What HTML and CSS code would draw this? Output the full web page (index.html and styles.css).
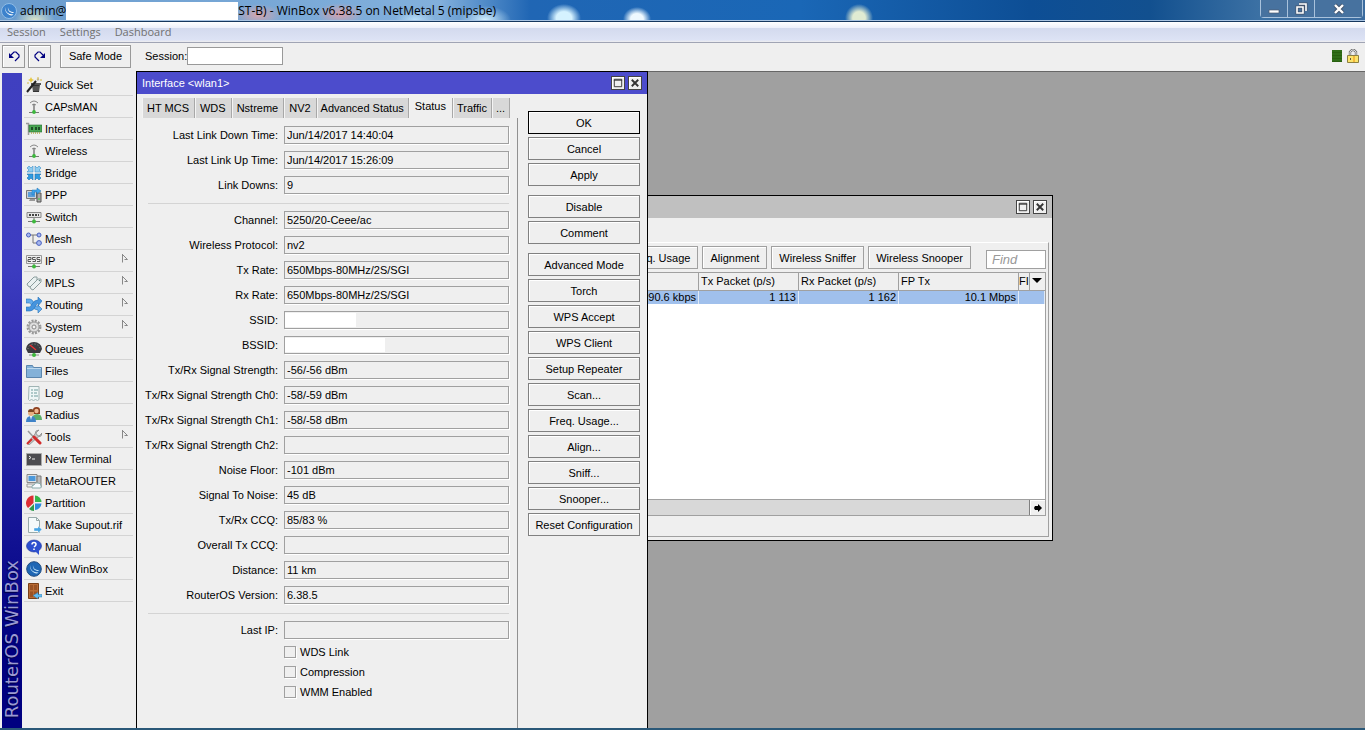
FILE: index.html
```html
<!DOCTYPE html>
<html lang="en">
<head>
  <meta charset="UTF-8">
  <meta name="viewport" content="width=device-width, initial-scale=1.0">
  <title>WinBox v6.38.5</title>
  <link rel="stylesheet" href="styles.css">
</head>
<body>
  <!-- Title bar -->
  <header class="titlebar">
    <svg class="app-icon" viewBox="0 0 16 16"><circle cx="8" cy="8" r="7.500" fill="#3c82cc" stroke="#8fbce6"/><path d="M4 3.500c0 5 3 8 8.500 8L11 12.500C6 12 3.500 8 4 3.500zM7 4c0 3 2 5 6 5l-1 1C8 9.500 6.500 7 7 4z" fill="#fff"/></svg>
    <span>admin@</span>
    <span class="blank"></span>
    <span>ST-B) - WinBox v6.38.5 on NetMetal 5 (mipsbe)</span>
    <div class="win-controls">
      <button aria-label="Minimize"><svg viewBox="0 0 14 14"><path d="M2 8h10v3H2z" fill="#fff" stroke="#4a5a70" stroke-width=".7"/></svg></button>
      <button aria-label="Restore"><svg viewBox="0 0 14 14"><path d="M5 2h7v7M3 5h6v6H3z" fill="none" stroke="#44546c" stroke-width="3"/><path d="M5 2h7v7M3 5h6v6H3z" fill="none" stroke="#fff" stroke-width="1.600"/></svg></button>
      <button class="close" aria-label="Close"><svg viewBox="0 0 14 14"><path d="M3 3l8 8M11 3l-8 8" stroke="#44546c" stroke-width="4"/><path d="M3 3l8 8M11 3l-8 8" stroke="#fff" stroke-width="2.400"/></svg></button>
    </div>
  </header>

  <nav class="menubar">
    <a href="#">Session</a>
    <a href="#">Settings</a>
    <a href="#">Dashboard</a>
  </nav>

  <div class="toolbar">
    <button class="tool" aria-label="Undo"><svg viewBox="0 0 14 14"><path d="M2 4v5h5z" fill="#000080"/><path d="M4 6l3-3h2l3 3v2l-4 4" fill="none" stroke="#000080" stroke-width="1.200"/></svg></button>
    <button class="tool" aria-label="Redo"><svg viewBox="0 0 14 14"><path d="M12 4v5H7z" fill="#000080"/><path d="M10 6L7 3H5L2 6v2l4 4" fill="none" stroke="#000080" stroke-width="1.200"/></svg></button>
    <button class="safe">Safe Mode</button>
    <label for="session">Session:</label>
    <input type="text" id="session">
    <span class="load"></span>
    <svg class="lock" viewBox="0 0 12 14"><path d="M3 7V3l2-2h2l2 2v4" fill="none" stroke="#777" stroke-width="2.400"/><path d="M3 7V3l2-2h2l2 2v4" fill="none" stroke="#ddd"/><path d="M.5 6.500h11v7H.5z" fill="#fbe46c" stroke="#8c8040"/><path d="M6 7h2v6H6z" fill="#f6b93c"/><path d="M3 9h1v2H3z" fill="#654"/></svg>
  </div>

  <div class="workspace">
    <div class="brand"><span>RouterOS WinBox</span></div>

    <nav class="sidebar">
      <a href="#"><svg viewBox="0 0 16 16"><path d="M6 7h8l-1 8H7z" fill="#333"/><path d="M5 6h10v2H5z" fill="#555"/><path d="M8 9v5M10 9v5M12 9v5" stroke="#777"/><path d="M1 15l9-11" stroke="#222" stroke-width="2"/><path d="M11 3l2-1" stroke="#bbb" stroke-width="2"/><path d="M5 0l1 2 2 1-2 1-1 2-1-2-2-1 2-1z" fill="#e8c840"/><path d="M12 0v3M14 3h2M1 6h2" stroke="#d8b840"/></svg>Quick Set</a>
      <a href="#"><svg viewBox="0 0 16 16"><path d="M4 4q4-4 8 0M6 6q2-2 4 0" fill="none" stroke="#888"/><path d="M8 5v8" stroke="#777" stroke-width="1.400"/><path d="M3 13.500h10" stroke="#777"/><circle cx="8" cy="13" r="1.900" fill="#3cb83c"/></svg>CAPsMAN</a>
      <a href="#"><svg viewBox="0 0 16 16"><path d="M0 2.500h2.500V14" fill="none" stroke="#999" stroke-width="1.500"/><path d="M3 4h13v7H3z" fill="#4aa653" stroke="#267032" stroke-width=".6"/><path d="M5 6h2v3H5zM9 6h2v3H9zM12 6h2v3h-2z" fill="#1f4f28"/><path d="M5 12h9" stroke="#b0a850" stroke-dasharray="1 1" stroke-width="1.500"/></svg>Interfaces</a>
      <a href="#"><svg viewBox="0 0 16 16"><path d="M4 4q4-4 8 0M6 6q2-2 4 0" fill="none" stroke="#888"/><path d="M8 5v8" stroke="#777" stroke-width="1.400"/><path d="M3 13.500h10" stroke="#777"/><circle cx="8" cy="13" r="1.900" fill="#3cb83c"/></svg>Wireless</a>
      <a href="#"><svg viewBox="0 0 16 16"><g fill="#8fcdf0" stroke="#3d8fca" stroke-width=".6"><path d="M1 3l2-2 2 2 2-2v6H1l2-2z"/><path d="M15 3l-2-2-2 2-2-2v6h6l-2-2z"/></g><g fill="#2f9be0" stroke="#1c70b0" stroke-width=".6"><path d="M1 13l2 2 2-2 2 2V9H1l2 2z"/><path d="M15 13l-2 2-2-2-2 2V9h6l-2 2z"/></g></svg>Bridge</a>
      <a href="#"><svg viewBox="0 0 16 16"><path d="M.5 3.500h10v8H.5z" fill="#ccd2d8" stroke="#777"/><path d="M2 5h7v5H2z" fill="#5c9ed8"/><path d="M3 14h6v-2H4z" fill="#999"/><path d="M11 6h4v9h-4z" fill="#aaa" stroke="#555"/><path d="M12 12h2" stroke="#3c3"/><path d="M6 8V3h5V1l4 3-4 3V5H8v3z" fill="#41a6ee" stroke="#1b70b5" stroke-width=".5"/></svg>PPP</a>
      <a href="#"><svg viewBox="0 0 16 16"><path d="M1 3.500h14v5H1z" fill="#e4e4e4" stroke="#888"/><path d="M3 6h10" stroke="#444" stroke-width="2" stroke-dasharray="2 1"/><path d="M8 9v4M2 12.500h12" stroke="#777"/><circle cx="8" cy="12.500" r="2" fill="#3cb83c"/></svg>Switch</a>
      <a href="#"><svg viewBox="0 0 16 16"><path d="M4 4h8M7 4v8h5" fill="none" stroke="#777"/><g fill="#a8b8f0" stroke="#4860c0"><circle cx="2.500" cy="4" r="2"/><circle cx="13" cy="4" r="2"/><circle cx="13" cy="12" r="2.400"/></g></svg>Mesh</a>
      <a href="#"><svg viewBox="0 0 16 16"><path d="M.5 2.500h15v8H.5z" fill="#eee" stroke="#999"/><path d="M2 4.500h3v2H2v2h3M9.500 4.500h-3v2h3v2h-3M14 4.500h-3v2h3v2h-3" fill="none" stroke="#555"/><path d="M8 11v3M2 13.500h12" stroke="#777"/><circle cx="8" cy="13.500" r="2" fill="#3cb83c"/></svg>IP<svg class="more" viewBox="0 0 7 10"><path d="M1.500 0v8.500M1.500.5l5 5h-3" fill="none" stroke="#888"/></svg></a>
      <a href="#"><svg viewBox="0 0 16 16"><g fill="#e9f0f0" stroke="#8a9c9c"><path d="M1 9l7-7h3v3l-7 7-2-1z"/><path d="M4 12l8-8h3v3l-8 8-2-1z"/></g><circle cx="13.500" cy="5.500" r=".8" fill="#688"/></svg>MPLS<svg class="more" viewBox="0 0 7 10"><path d="M1.500 0v8.500M1.500.5l5 5h-3" fill="none" stroke="#888"/></svg></a>
      <a href="#"><svg viewBox="0 0 16 16"><path d="M0 2h4q2 0 4 4t4 4V8l4 4-4 4v-3q-4 0-6-4T3 6H0z" fill="#63acec" stroke="#2672ba" stroke-width=".6"/><path d="M0 14h4q3 0 5-4t3-4v3l4-5-4-4v3q-4 0-6 4t-3 3H0z" fill="#4594de" stroke="#2672ba" stroke-width=".6"/></svg>Routing<svg class="more" viewBox="0 0 7 10"><path d="M1.500 0v8.500M1.500.5l5 5h-3" fill="none" stroke="#888"/></svg></a>
      <a href="#"><svg viewBox="0 0 16 16"><circle cx="8" cy="8" r="6.200" fill="none" stroke="#999" stroke-width="2.500" stroke-dasharray="2 1.250"/><circle cx="8" cy="8" r="5" fill="#ddd" stroke="#999"/><circle cx="8" cy="8" r="2" fill="#f4f4f4" stroke="#888"/></svg>System<svg class="more" viewBox="0 0 7 10"><path d="M1.500 0v8.500M1.500.5l5 5h-3" fill="none" stroke="#888"/></svg></a>
      <a href="#"><svg viewBox="0 0 16 16"><path d="M0 8a8 7 0 0 1 16 0l-2 4H2z" fill="#3b3b40"/><path d="M2 8a6 5 0 0 1 12 0" fill="none" stroke="#999" stroke-dasharray="1 2"/><path d="M4 4l6 5" stroke="#e33" stroke-width="1.300"/><path d="M8 12v2M3 14h10" stroke="#888"/><circle cx="8" cy="14" r="2" fill="#3cb83c"/></svg>Queues</a>
      <a href="#"><svg viewBox="0 0 16 16"><path d="M.5 2.500h6l1 2h8v10H.5z" fill="#83b1d8" stroke="#5b86ad"/><path d="M1 5.500h14" stroke="#bcd8ee"/></svg>Files</a>
      <a href="#"><svg viewBox="0 0 16 16"><path d="M3 1.500h10v13l-1.500 1-2-1-2 1-2-1-2 1-1-1z" fill="#eef6f6" stroke="#a0b4b4"/><path d="M5 5h2M8 5h4M5 8h2M8 8h3M5 11h2M8 11h4" stroke="#6f9c9c"/></svg>Log</a>
      <a href="#"><svg viewBox="0 0 16 16"><path d="M7 7V3q0-3 3.500-3T14 3v4z" fill="#8c3d1c"/><circle cx="10.500" cy="4" r="2.200" fill="#f0b890"/><path d="M6 13q0-6 5-6t5 6z" fill="#5cae68"/><circle cx="5" cy="6" r="3" fill="#e8b080"/><path d="M2 5q0-3 3-3t3 3z" fill="#7c4420"/><path d="M0 15q0-6 5-6t5 6z" fill="#3f82c8"/><path d="M4 9h2l-1 4z" fill="#fff"/></svg>Radius</a>
      <a href="#"><svg viewBox="0 0 16 16"><path d="M2 2l11 12" stroke="#999" stroke-width="1.500"/><path d="M13 1l-3 3 1 2 2 1 3-3q0 4-4 4l-9 8-2-2 8-9q0-4 4-4z" fill="#c4c4c4" stroke="#777" stroke-width=".6"/><path d="M8 8l6 6" stroke="#d22c2c" stroke-width="3" stroke-linecap="round"/><path d="M1 15l5-5" stroke="#d22c2c" stroke-width="2"/></svg>Tools<svg class="more" viewBox="0 0 7 10"><path d="M1.500 0v8.500M1.500.5l5 5h-3" fill="none" stroke="#888"/></svg></a>
      <a href="#"><svg viewBox="0 0 16 16"><path d="M.5 2.500h15v12H.5z" fill="#4c4c50" stroke="#aaa"/><path d="M3 5l2 1.500L3 8M6 8h3" fill="none" stroke="#eee"/></svg>New Terminal</a>
      <a href="#"><svg viewBox="0 0 16 16"><path d="M1 1.500h10v8H1z" fill="#dfe4ea" stroke="#888"/><path d="M2.500 3h7v5h-7z" fill="#4b98da"/><path d="M11 3h4v11h-4z" fill="#bbb" stroke="#777"/><path d="M1 11h8v3H1z" fill="#eee" stroke="#999"/><path d="M6 15q-1-3 2-3 1-3 4-2 3 0 3 3 1 2-1 2z" fill="#f7fbff" stroke="#8aa"/></svg>MetaROUTER</a>
      <a href="#"><svg viewBox="0 0 16 16"><path d="M7.500 8V0.500A7.500 7.500 0 0 0 2 13z" fill="#dd2e34"/><path d="M9 7V.5A7 7 0 0 1 15.500 7z" fill="#36b64a"/><path d="M9 8.500h6.500A7 7 0 0 1 9 15z" fill="#2d8cdd"/><path d="M8 9l-5 5q2 2 5 2z" fill="#2b9b48"/></svg>Partition</a>
      <a href="#"><svg viewBox="0 0 16 16"><path d="M2.500.5h8l3 3v12h-11z" fill="#f4fafa" stroke="#98aaaa"/><path d="M10.500.5v3h3" fill="none" stroke="#98aaaa"/><path d="M8 11h4V9l4 3.500-4 3.500v-2H8z" fill="#45a5e4" stroke="#fff" stroke-width=".4"/></svg>Make Supout.rif</a>
      <a href="#"><svg viewBox="0 0 16 16"><ellipse cx="8" cy="7" rx="7.500" ry="6" fill="#2d50d0" stroke="#1a2f98" stroke-width=".6"/><path d="M9 12l4-1v5z" fill="#2d50d0"/><path d="M6 5.500q0-2 2-2t2 2q0 1-2 2.500M8 9.500v1.500" fill="none" stroke="#fff" stroke-width="1.500"/></svg>Manual</a>
      <a href="#"><svg viewBox="0 0 16 16"><circle cx="8" cy="8" r="7.300" fill="#1e66b4" stroke="#204c80"/><path d="M4 3.500c0 5 3 8 8.500 8L11 12.500C6 12 3.500 8 4 3.500zM7 4c0 3 2 5 6 5l-1 1C8 9.500 6.500 7 7 4z" fill="#c8e8fc"/></svg>New WinBox</a>
      <a href="#"><svg viewBox="0 0 16 16"><path d="M2.500.5h10v15h-10z" fill="#b86a34" stroke="#7a4018"/><path d="M4 2h3v5H4zM8 2h3v5H8zM4 8.500h3V14H4zM8 8.500h3V14H8z" fill="#9a5224"/><path d="M16 11.500h-4v-2L7 12.500l5 3.500v-2h4z" fill="#65bdf0" stroke="#2878b0" stroke-width=".5"/></svg>Exit</a>
    </nav>

    <main class="desktop">
      <!-- Wireless tables window -->
      <section class="window tables">
        <div class="window-title">
          <button class="ctl" aria-label="Maximize"><svg viewBox="0 0 13 13"><path d="M2.500 2.500h8v8h-8zM2 3.500h9" fill="none" stroke="#333"/></svg></button>
          <button class="ctl" aria-label="Close"><svg viewBox="0 0 13 13"><path d="M3 3l7 7M10 3l-7 7" stroke="#333" stroke-width="2"/></svg></button>
        </div>
        <div class="tables-body">
          <div class="table-tools">
            <button>Freq. Usage</button>
            <button>Alignment</button>
            <button>Wireless Sniffer</button>
            <button>Wireless Snooper</button>
            <input type="text" class="find" placeholder="Find" aria-label="Find">
          </div>
          <div class="grid">
            <table>
              <colgroup><col><col class="c-packet"><col class="c-packet"><col class="c-fp"><col class="c-cut"><col class="c-drop"></colgroup>
              <thead>
                <tr><th></th><th>Tx Packet (p/s)</th><th>Rx Packet (p/s)</th><th>FP Tx</th><th class="cut">FI</th><th class="drop"><svg viewBox="0 0 10 6"><path d="M0 0h10L5 5z"/></svg></th></tr>
              </thead>
              <tbody>
                <tr><td>90.6 kbps</td><td>1 113</td><td>1 162</td><td>10.1 Mbps</td><td colspan="2"></td></tr>
              </tbody>
            </table>
          </div>
          <div class="scroll"><button aria-label="Scroll right"><svg viewBox="0 0 8 8"><path d="M1 2h3V0l4 4-4 4V6H1L0 4z"/></svg></button></div>
        </div>
      </section>

      <!-- Interface window -->
      <section class="window interface">
        <div class="window-title">
          <span>Interface &lt;wlan1&gt;</span>
          <button class="ctl" aria-label="Maximize"><svg viewBox="0 0 13 13"><path d="M2.500 2.500h8v8h-8zM2 3.500h9" fill="none" stroke="#333"/></svg></button>
          <button class="ctl" aria-label="Close"><svg viewBox="0 0 13 13"><path d="M3 3l7 7M10 3l-7 7" stroke="#333" stroke-width="2"/></svg></button>
        </div>
        <div class="interface-body">
          <div class="left">
            <div class="tabs">
              <button>HT MCS</button>
              <button>WDS</button>
              <button>Nstreme</button>
              <button>NV2</button>
              <button>Advanced Status</button>
              <button class="active">Status</button>
              <button>Traffic</button>
              <button>...</button>
            </div>
            <form class="status">
              <div class="field"><label for="f1">Last Link Down Time:</label><input id="f1" value="Jun/14/2017 14:40:04" readonly></div>
              <div class="field"><label for="f2">Last Link Up Time:</label><input id="f2" value="Jun/14/2017 15:26:09" readonly></div>
              <div class="field"><label for="f3">Link Downs:</label><input id="f3" value="9" readonly></div>
              <hr>
              <div class="field"><label for="f4">Channel:</label><input id="f4" value="5250/20-Ceee/ac" readonly></div>
              <div class="field"><label for="f5">Wireless Protocol:</label><input id="f5" value="nv2" readonly></div>
              <div class="field"><label for="f6">Tx Rate:</label><input id="f6" value="650Mbps-80MHz/2S/SGI" readonly></div>
              <div class="field"><label for="f7">Rx Rate:</label><input id="f7" value="650Mbps-80MHz/2S/SGI" readonly></div>
              <div class="field"><label for="f8">SSID:</label><input id="f8" class="masked short" readonly></div>
              <div class="field"><label for="f9">BSSID:</label><input id="f9" class="masked" readonly></div>
              <div class="field"><label for="f10">Tx/Rx Signal Strength:</label><input id="f10" value="-56/-56 dBm" readonly></div>
              <div class="field"><label for="f11">Tx/Rx Signal Strength Ch0:</label><input id="f11" value="-58/-59 dBm" readonly></div>
              <div class="field"><label for="f12">Tx/Rx Signal Strength Ch1:</label><input id="f12" value="-58/-58 dBm" readonly></div>
              <div class="field"><label for="f13">Tx/Rx Signal Strength Ch2:</label><input id="f13" readonly></div>
              <div class="field"><label for="f14">Noise Floor:</label><input id="f14" value="-101 dBm" readonly></div>
              <div class="field"><label for="f15">Signal To Noise:</label><input id="f15" value="45 dB" readonly></div>
              <div class="field"><label for="f16">Tx/Rx CCQ:</label><input id="f16" value="85/83 %" readonly></div>
              <div class="field"><label for="f17">Overall Tx CCQ:</label><input id="f17" readonly></div>
              <div class="field"><label for="f18">Distance:</label><input id="f18" value="11 km" readonly></div>
              <div class="field"><label for="f19">RouterOS Version:</label><input id="f19" value="6.38.5" readonly></div>
              <hr>
              <div class="field"><label for="f20">Last IP:</label><input id="f20" readonly></div>
              <div class="checks">
                <label><input type="checkbox">WDS Link</label>
                <label><input type="checkbox">Compression</label>
                <label><input type="checkbox">WMM Enabled</label>
              </div>
            </form>
          </div>
          <div class="actions">
            <div class="group">
              <button class="default">OK</button>
              <button>Cancel</button>
              <button>Apply</button>
            </div>
            <div class="group">
              <button>Disable</button>
              <button>Comment</button>
            </div>
            <div class="group">
              <button>Advanced Mode</button>
              <button>Torch</button>
              <button>WPS Accept</button>
              <button>WPS Client</button>
              <button>Setup Repeater</button>
              <button>Scan...</button>
              <button>Freq. Usage...</button>
              <button>Align...</button>
              <button>Sniff...</button>
              <button>Snooper...</button>
              <button>Reset Configuration</button>
            </div>
          </div>
        </div>
      </section>
    </main>
  </div>
</body>
</html>
```
FILE: styles.css
```css
* {
  box-sizing: border-box;
}

body {
  margin: 0;
  height: 100vh;
  display: flex;
  flex-direction: column;
  overflow: hidden;
  background: #efefef;
  border-bottom: 2px solid #2a5878;
  color: #000;
  font-family: "Liberation Sans", Arial, sans-serif;
  font-size: 11px;
}

button, input {
  font: inherit;
  color: inherit;
  margin: 0;
}

button {
  display: flex;
  align-items: center;
  justify-content: center;
  padding: 0;
  background: #efefef;
  border: 1px solid #808080;
  box-shadow: inset 1px 1px #fff;
  white-space: nowrap;
}

a {
  color: inherit;
  text-decoration: none;
}

/* Title bar */
.titlebar {
  display: flex;
  align-items: center;
  flex: none;
  height: 22px;
  padding-left: 1px;
  border-bottom: 1px solid #16375e;
  box-shadow: inset 0 -1px #a9c4e2;
  font-family: "Open Sans", sans-serif;
  font-size: 12px;
  background:
    radial-gradient(ellipse 20px 12px at 35px 20px, #dce4c8, transparent),
    radial-gradient(ellipse 24px 11px at 258px 15px, #d4a5ae, transparent),
    radial-gradient(ellipse 24px 11px at 340px 14px, #d7a1ac, transparent),
    radial-gradient(ellipse 20px 10px at 415px 20px, #b9def7, transparent),
    radial-gradient(ellipse 26px 14px at 485px 20px, #d2f0ff, transparent),
    radial-gradient(ellipse 17px 14px at 564px 18px, #d5f2ff 45%, transparent),
    radial-gradient(ellipse 14px 12px at 637px 19px, #eef9ff 45%, transparent),
    radial-gradient(ellipse 14px 14px at 859px 18px, #e0ebd2 45%, transparent),
    linear-gradient(90deg, #6a9cce 0, #82b0dc 440px, #2066b4 530px, #1a67b6 800px, #0d4e95 1030px, #12508f 1150px, #3c71a4 1260px, #3c6c9f);
}

.app-icon {
  width: 16px;
  height: 16px;
  margin-right: 3px;
}

.blank {
  align-self: stretch;
  width: 172px;
  margin: 2px 0 1px;
  background: #fff;
}

.win-controls {
  display: flex;
  align-self: flex-start;
  margin: 0 2px 0 auto;
  border: 1px solid #a9c2dc;
  border-top: 0;
  border-radius: 0 0 4px 4px;
}

.win-controls button {
  width: 27px;
  height: 17px;
  background: #47729f;
  border: 0;
  border-right: 1px solid #a9c2dc;
  box-shadow: none;
}

.win-controls .close {
  width: 47px;
  border-right: 0;
}

.win-controls svg {
  width: 14px;
  height: 14px;
}

/* Menu and toolbar */
.menubar {
  display: flex;
  align-items: center;
  flex: none;
  gap: 14px;
  height: 21px;
  padding: 0 0 2px 7px;
  color: #707070;
  font-family: "Open Sans", sans-serif;
  background: linear-gradient(#fff, #eceffa 30%, #d3daee 31%, #dde3f5 90%, #eee);
  border-bottom: 1px solid #a0a4b4;
}

.toolbar {
  display: flex;
  align-items: center;
  flex: none;
  height: 28px;
  padding: 0 6px 2px 2px;
}

.toolbar button {
  height: 23px;
  border-color: #999;
}

.toolbar .tool {
  width: 23px;
  margin-right: 3px;
}

.tool svg {
  width: 14px;
  height: 14px;
}

.toolbar .safe {
  width: 71px;
  margin: 0 14px 0 6px;
}

.toolbar input {
  width: 96px;
  height: 18px;
  border: 1px solid #999;
}

.load {
  width: 10px;
  height: 12px;
  margin: 0 5px 0 auto;
  background: repeating-linear-gradient(#2f6d18 0 2px, #28600f 2px 3px);
}

.lock {
  width: 12px;
  height: 14px;
}

/* Workspace */
.workspace {
  display: flex;
  flex: 1;
  min-height: 0;
}

.brand {
  flex: none;
  width: 20px;
  margin: 2px 0 0 2px;
  display: flex;
  align-items: flex-end;
  justify-content: center;
  padding-bottom: 10px;
  background: linear-gradient(#4040c0, #3c3cc0 30%, #000080 88%);
  color: #9a9ad2;
  font-family: "DejaVu Sans", sans-serif;
  font-size: 18px;
  line-height: 20px;
}

.brand span {
  writing-mode: vertical-rl;
  transform: rotate(180deg);
  white-space: nowrap;
  text-shadow: -1px -1px 1px #000040;
}

.sidebar {
  flex: none;
  width: 114px;
  padding: 3px 3px 0 2px;
}

.sidebar a {
  display: flex;
  align-items: center;
  height: 22px;
  padding-left: 2px;
  border-bottom: 1px solid #d4d4d4;
}

.sidebar svg {
  width: 16px;
  height: 16px;
  margin-right: 3px;
}

.sidebar .more {
  width: 7px;
  height: 10px;
  margin: 0 5px 4px auto;
}

.desktop {
  position: relative;
  flex: 1;
  overflow: hidden;
  background: #a0a0a0;
  box-shadow: inset 0 1px #666;
}

/* Windows */
.window {
  position: absolute;
  display: flex;
  flex-direction: column;
  border: 1px solid #000;
  background: #efefef;
}

.window-title {
  display: flex;
  align-items: center;
  flex: none;
  gap: 3px;
  height: 22px;
  padding: 0 5px;
}

.window-title span {
  margin-right: auto;
}

.ctl {
  width: 14px;
  height: 14px;
  border-color: #444;
}

.ctl svg {
  width: 12px;
  height: 12px;
}

.interface {
  left: 0;
  top: 0;
  width: 512px;
  height: 100%;
  border-bottom: 0;
}

.interface .window-title {
  background: #4c4ccc;
  color: #fff;
}

.interface-body {
  display: flex;
  flex: 1;
  gap: 10px;
  padding: 4px 7px 0 5px;
}

.left {
  flex: 1;
  display: flex;
  flex-direction: column;
}

.tabs {
  display: flex;
  align-items: flex-end;
  flex: none;
  height: 20px;
}

.tabs button {
  height: 20px;
  padding: 0 4px;
  border: 0;
  border-right: 1px solid #a8a8a8;
  background: #d8d8d8;
  box-shadow: inset 1px 0 #f4f4f4;
}

.tabs button:nth-child(-n+4) {
  padding: 0 5px;
}

.tabs .active {
  padding: 0 6px 4px;
  background: #efefef;
}

.status {
  flex: 1;
  padding: 8px 8px 0 3px;
  border-right: 1px solid #909090;
}

.field {
  display: flex;
  align-items: center;
  gap: 6px;
  margin-bottom: 7px;
}

.field label {
  width: 133px;
  text-align: right;
  white-space: nowrap;
}

.field input {
  flex: 1;
  min-width: 0;
  height: 18px;
  padding: 0 2px;
  border: 1px solid #a0a0a0;
  box-shadow: 1px 1px #fff;
  background: #efefef;
}

.field .masked {
  background: linear-gradient(#fff, #fff) 0 1px / 100px 14px no-repeat #efefef;
}

.field .short {
  background-size: 71px 14px;
}

.status hr {
  height: 1px;
  margin: 9px 0 7px 3px;
  border: 0;
  background: #d4d4d4;
}

.checks {
  display: flex;
  flex-direction: column;
  gap: 8px;
  padding-left: 139px;
}

.checks label {
  display: flex;
  align-items: center;
  gap: 4px;
  height: 12px;
}

.checks input {
  appearance: none;
  width: 12px;
  height: 12px;
  border: 1px solid #a0a0a0;
  box-shadow: 1px 1px #fff;
}

.actions {
  flex: none;
  width: 112px;
  padding-top: 13px;
}

.group {
  display: flex;
  flex-direction: column;
  gap: 3px;
  margin-bottom: 9px;
}

.group button {
  height: 23px;
}

.group .default {
  border-color: #000;
}

.tables {
  left: 344px;
  top: 124px;
  width: 573px;
  height: 346px;
}

.tables .window-title {
  justify-content: flex-end;
  background: #c0c0c0;
}

.tables-body {
  display: flex;
  flex-direction: column;
  flex: 1;
  margin: 24px 3px 3px;
  padding: 3px 2px 20px;
  border: 1px solid #a0a0a0;
  border-top-color: #fff;
}

.table-tools {
  display: flex;
  justify-content: flex-end;
  gap: 4px;
  margin-bottom: 3px;
}

.table-tools button {
  height: 23px;
  padding: 0 7px;
  border-color: #a0a0a0;
}

.find {
  width: 60px;
  height: 19px;
  margin: 4px 0 0 11px;
  padding: 0 5px;
  border: 1px solid #a0a0a0;
}

.find::placeholder {
  color: #999;
  font-size: 13px;
  font-style: italic;
}

.grid {
  flex: 1;
  background: #fff;
  border: 1px solid #a0a0a0;
  border-left: 0;
}

.grid table {
  width: 100%;
  table-layout: fixed;
  border-collapse: collapse;
}

.c-packet {
  width: 100px;
}

.c-fp {
  width: 120px;
}

.c-cut {
  width: 11px;
}

.c-drop {
  width: 15px;
}

.grid th, .grid td {
  padding: 0 2px;
  overflow: hidden;
  white-space: nowrap;
  font-weight: normal;
}

.grid th {
  height: 17px;
  text-align: left;
  background: #efefef;
  border-right: 1px solid #a0a0a0;
  border-bottom: 1px solid #a0a0a0;
}

.grid .cut {
  padding: 0;
}

.grid .drop {
  border-right: 0;
}

.drop svg {
  display: block;
  width: 10px;
  height: 6px;
}

.grid td {
  height: 14px;
  text-align: right;
  background: #a0c0ec;
  border-right: 1px solid #dfe9f6;
}

.scroll {
  display: flex;
  justify-content: flex-end;
  flex: none;
  height: 16px;
  background: #d8d8d8;
  border: 1px solid #a0a0a0;
  border-top: 0;
}

.scroll button {
  width: 16px;
  border-width: 0 0 0 1px;
}

.scroll svg {
  width: 8px;
  height: 8px;
}
```
